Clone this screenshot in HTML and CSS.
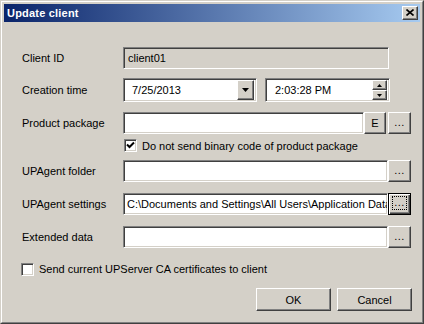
FILE: index.html
```html
<!DOCTYPE html>
<html>
<head>
<meta charset="utf-8">
<link rel="stylesheet" href="styles.css">
</head>
<body>
<div class="window">
  <div class="frame">
    <div class="titlebar">
      <span class="title">Update client</span>
      <button class="btn close-btn"><svg width="8" height="7" viewBox="0 0 8 7"><path d="M0.5 0.5 L7.5 6.5 M7.5 0.5 L0.5 6.5" stroke="#000" stroke-width="1.6" fill="none"/></svg></button>
    </div>
    <div class="content">
      <div class="row r-first">
        <span class="label">Client ID</span>
        <div class="edit disabled w-full">client01</div>
      </div>
      <div class="row r-time">
        <span class="label">Creation time</span>
        <div class="edit date">
          <span>7/25/2013</span>
          <span class="btn drop"><svg width="7" height="4" viewBox="0 0 7 4"><path d="M0 0 H7 L3.5 4 Z" fill="#000"/></svg></span>
        </div>
        <div class="edit time">
          <span>2:03:28 PM</span>
          <span class="spin">
            <span class="btn spin-btn"><svg width="5" height="3" viewBox="0 0 5 3"><path d="M2.5 0 L5 3 H0 Z" fill="#000"/></svg></span>
            <span class="btn spin-btn"><svg width="5" height="3" viewBox="0 0 5 3"><path d="M0 0 H5 L2.5 3 Z" fill="#000"/></svg></span>
          </span>
        </div>
      </div>
      <div class="row r-prod">
        <span class="label">Product package</span>
        <div class="edit w-prod"></div>
        <button class="btn sq e-btn">E</button>
        <button class="btn sq dots">...</button>
      </div>
      <div class="check-row r-bin">
        <span class="box"><svg width="9" height="9" viewBox="0 0 9 9"><path d="M1 3.5 L3.5 6 L8 1.5" stroke="#000" stroke-width="2" fill="none"/></svg></span>
        <span>Do not send binary code of product package</span>
      </div>
      <div class="row r-folder">
        <span class="label">UPAgent folder</span>
        <div class="edit w-std"></div>
        <button class="btn sq dots">...</button>
      </div>
      <div class="row">
        <span class="label">UPAgent settings</span>
        <div class="edit w-std clip">C:\Documents and Settings\All Users\Application Data\UPAgent</div>
        <button class="btn sq dots focused"><span class="focus-rect">...</span></button>
      </div>
      <div class="row">
        <span class="label">Extended data</span>
        <div class="edit w-std"></div>
        <button class="btn sq dots">...</button>
      </div>
      <div class="check-row r-send">
        <span class="box"></span>
        <span>Send current UPServer CA certificates to client</span>
      </div>
      <div class="buttons">
        <button class="btn push">OK</button>
        <button class="btn push">Cancel</button>
      </div>
    </div>
  </div>
</div>
</body>
</html>
```
FILE: styles.css
```css
* { box-sizing: border-box; }
html, body { margin: 0; padding: 0; }
body {
  background: #d4d0c8;
  font-family: "Liberation Sans", Arial, sans-serif;
  font-size: 11px;
  color: #000;
}
.window {
  width: 424px;
  height: 324px;
  border: 1px solid;
  border-color: #d4d0c8 #404040 #404040 #d4d0c8;
  background: #d4d0c8;
}
.frame {
  height: 100%;
  border: 1px solid;
  border-color: #ffffff #808080 #808080 #ffffff;
  padding: 2px;
}
.titlebar {
  height: 18px;
  background: linear-gradient(to right, #0a246a, #a6caf0);
  display: flex;
  align-items: center;
  justify-content: space-between;
  padding: 0 2px 0 3px;
}
.title {
  color: #fff;
  font-weight: bold;
  font-size: 11px;
  letter-spacing: 0.2px;
}
.btn {
  background: #d4d0c8;
  border: 1px solid;
  border-color: #ffffff #404040 #404040 #ffffff;
  box-shadow: inset -1px -1px #808080, inset 1px 1px #d4d0c8;
  font-family: inherit;
  font-size: 11px;
  color: #000;
  padding: 0;
  margin: 0;
  display: flex;
  align-items: center;
  justify-content: center;
}
.close-btn {
  width: 16px;
  height: 14px;
  padding-bottom: 1px;
}
.content {
  padding: 25px 8px 0 18px;
}
.row {
  display: flex;
  align-items: center;
  height: 22px;
  margin-top: 11px;
}
.r-first { margin-top: 0; }
.r-time { margin-top: 9px; height: 24px; }
.r-prod { margin-top: 10px; }
.r-folder { margin-top: 6px; }
.label {
  width: 101px;
  flex: none;
  white-space: nowrap;
}
.edit {
  height: 22px;
  background: #fff;
  border: 1px solid;
  border-color: #808080 #ffffff #ffffff #808080;
  box-shadow: inset 1px 1px #404040, inset -1px -1px #d4d0c8;
  padding: 0 3px;
  display: flex;
  align-items: center;
  white-space: nowrap;
  overflow: hidden;
  flex: none;
}
.disabled { background: #d4d0c8; padding-left: 4px; }
.w-full { width: 266px; height: 22px; }
.w-std { width: 265px; }
.w-prod { width: 241px; }
.clip { padding-left: 3px; }
.date {
  width: 134px;
  height: 24px;
  padding: 0 2px 0 8px;
  justify-content: space-between;
}
.drop {
  width: 17px;
  height: 20px;
}
.time {
  width: 125px;
  height: 24px;
  margin-left: 8px;
  padding: 0 2px 0 9px;
  justify-content: space-between;
}
.spin {
  display: flex;
  flex-direction: column;
  height: 20px;
}
.spin-btn {
  width: 15px;
  height: 10px;
}
.sq {
  width: 23px;
  height: 22px;
  flex: none;
}
.e-btn { width: 22px; margin-right: 2px; }
.dots { letter-spacing: 0.5px; padding-bottom: 2px; }
.focused {
  border: 1px solid #000;
  box-shadow: inset 1px 1px #fff, inset -1px -1px #404040, inset -2px -2px #808080;
}
.focus-rect {
  border: 1px dotted #000;
  width: 15px;
  height: 14px;
  display: flex;
  align-items: center;
  justify-content: center;
  padding-bottom: 2px;
}
.check-row {
  display: flex;
  align-items: center;
  white-space: nowrap;
}
.box {
  width: 13px;
  height: 13px;
  background: #fff;
  border: 1px solid;
  border-color: #808080 #ffffff #ffffff #808080;
  box-shadow: inset 1px 1px #404040, inset -1px -1px #d4d0c8;
  margin-right: 5px;
  display: flex;
  align-items: center;
  justify-content: center;
  flex: none;
}
.r-bin {
  margin-top: 3px;
  height: 17px;
  padding-left: 102px;
}
.r-send {
  margin-top: 11px;
  height: 20px;
  padding-left: 0;
  margin-left: -1px;
}
.buttons {
  display: flex;
  justify-content: flex-end;
  gap: 6px;
  margin-top: 9px;
}
.push {
  width: 75px;
  height: 23px;
}
```
